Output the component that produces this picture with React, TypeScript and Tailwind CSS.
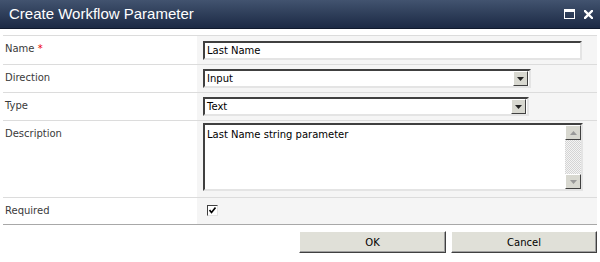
import type { ReactNode } from 'react';

const FONT = { fontFamily: '"DejaVu Sans", Verdana, sans-serif' };

function Row({ label, children, h, last }: { label: ReactNode; children: ReactNode; h: string; last?: boolean }) {
  return (
    <div className={`flex border-t ${last ? 'border-b border-b-[#a8a8a8]' : ''} border-t-[#dcdcdc] ${h}`}>
      <div className="w-[194px] shrink-0 pl-[2px] pt-[5px] text-[10px] text-[#3a3a3a]">{label}</div>
      <div className="flex-1 bg-[#f5f5f5] pl-[6px]">{children}</div>
    </div>
  );
}

function DropArrow() {
  return (
    <div className="flex h-[15px] w-[15px] items-center justify-center border border-t-white border-l-white border-r-[#404040] border-b-[#404040] bg-[#d8d8d0]">
      <svg width="7" height="4" viewBox="0 0 7 4"><path d="M0 0h7L3.5 4z" fill="#222" /></svg>
    </div>
  );
}

function Select({ value, w }: { value: string; w: string }) {
  return (
    <div className={`mt-[4px] flex h-[19px] ${w} items-center border-2 border-t-[#404040] border-l-[#404040] border-r-[#e4e4e4] border-b-[#e4e4e4] bg-white pl-[2px] pr-[1px] text-[10px] text-black`}>
      <span className="flex-1">{value}</span>
      <DropArrow />
    </div>
  );
}

export default function App() {
  return (
    <div className="h-[262px] w-[600px] overflow-hidden bg-white" style={FONT}>
      {/* title bar */}
      <div className="flex h-[29px] items-center border-b border-b-[#101a2e] bg-gradient-to-b from-[#42536f] to-[#1c2a45] pl-[9px] pr-[6px]">
        <span className="flex-1 text-[15px] text-white" style={{ fontFamily: '"Liberation Sans", Arial, sans-serif' }}>
          Create Workflow Parameter
        </span>
        <svg width="11" height="10" viewBox="0 0 11 10" className="mr-[9px]">
          <rect x="0.5" y="0.5" width="10" height="9" fill="none" stroke="#fff" />
          <rect x="0" y="0" width="11" height="3" fill="#fff" />
        </svg>
        <svg width="9" height="9" viewBox="0 0 9 9" className="mr-[1px]">
          <path d="M1 1l7 7M8 1L1 8" stroke="#fff" strokeWidth="2.4" strokeLinecap="square" />
        </svg>
      </div>

      <div className="mx-[3px] mt-[6px]">
        <Row label={<>Name <span className="text-[#e00]">*</span></>} h="h-[29px]">
          <div className="mt-[5px] flex h-[19px] w-[379px] items-center border-2 border-t-[#404040] border-l-[#404040] border-r-[#e4e4e4] border-b-[#e4e4e4] bg-white pl-[2px] text-[10px] text-black">
            Last Name
          </div>
        </Row>
        <Row label="Direction" h="h-[28px]">
          <Select value="Input" w="w-[328px]" />
        </Row>
        <Row label="Type" h="h-[28px]">
          <Select value="Text" w="w-[326px]" />
        </Row>
        <Row label="Description" h="h-[77px]">
          <div className="mt-[2px] flex h-[68px] w-[380px] border-2 border-t-[#404040] border-l-[#404040] border-r-[#e4e4e4] border-b-[#e4e4e4] bg-white text-[10px] text-black">
            <div className="flex-1 pl-[2px] pt-[2px]">Last Name string parameter</div>
            <div className="flex w-[16px] flex-col">
              <div className="flex h-[15px] items-center justify-center border border-t-white border-l-white border-r-[#404040] border-b-[#404040] bg-[#d8d8d0]">
                <svg width="7" height="4" viewBox="0 0 7 4"><path d="M0 4h7L3.5 0z" fill="#999" /></svg>
              </div>
              <div className="flex-1 bg-[repeating-conic-gradient(#d4d4d4_0_25%,#f4f4f4_0_50%)] bg-[length:2px_2px]" />
              <div className="flex h-[15px] items-center justify-center border border-t-white border-l-white border-r-[#404040] border-b-[#404040] bg-[#d8d8d0]">
                <svg width="7" height="4" viewBox="0 0 7 4"><path d="M0 0h7L3.5 4z" fill="#999" /></svg>
              </div>
            </div>
          </div>
        </Row>
        <Row label="Required" h="h-[28px]" last>
          <div className="ml-[4px] mt-[7px] flex h-[11px] w-[11px] items-center justify-center border border-t-[#404040] border-l-[#404040] border-r-[#e4e4e4] border-b-[#e4e4e4] bg-white">
            <svg width="7" height="7" viewBox="0 0 7 7"><path d="M0.5 3l2 2.5L6.5 0.5" fill="none" stroke="#000" strokeWidth="1.6" /></svg>
          </div>
        </Row>

        <div className="mt-[6px] flex justify-end gap-[5px]">
          <button className="h-[22px] w-[147px] border border-t-white border-l-white border-r-[#404040] border-b-[#404040] bg-[#e0e0d8] text-[10px] text-black shadow-[inset_-1px_-1px_0_#a0a0a0]">
            OK
          </button>
          <button className="h-[22px] w-[146px] border border-t-white border-l-white border-r-[#404040] border-b-[#404040] bg-[#e0e0d8] text-[10px] text-black shadow-[inset_-1px_-1px_0_#a0a0a0]">
            Cancel
          </button>
        </div>
      </div>
    </div>
  );
}
